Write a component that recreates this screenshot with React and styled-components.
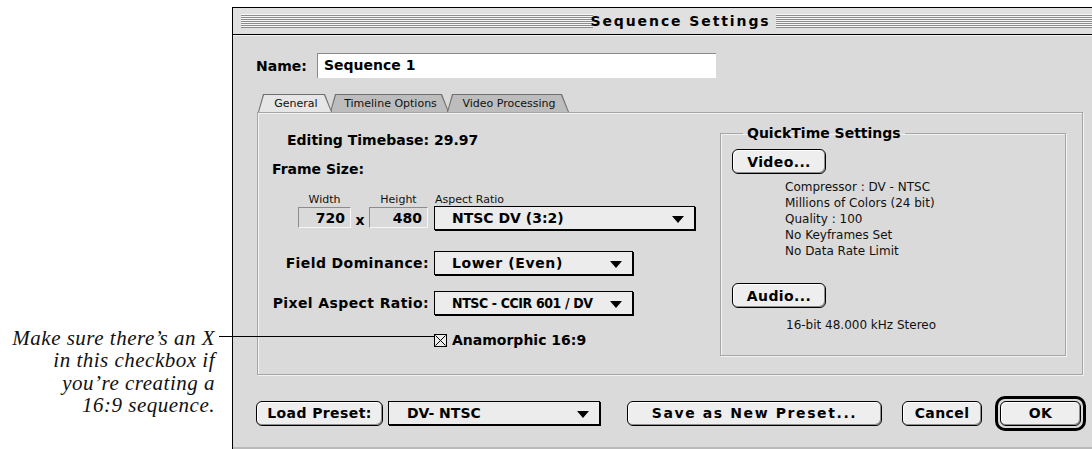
import React from "react";
import styled, { createGlobalStyle } from "styled-components";

const GlobalStyle = createGlobalStyle`
  html, body {
    margin: 0;
    padding: 0;
    background: #fff;
    overflow: hidden;
  }
  body {
    font-family: "DejaVu Sans", sans-serif;
    color: #000;
  }
`;

const SequenceSettings = () => {
  return (
    <Page>
      <GlobalStyle />
      <Caption>
        <CaptionLine>Make sure there’s an X</CaptionLine>
        <CaptionLine>in this checkbox if</CaptionLine>
        <CaptionLine>you’re creating a</CaptionLine>
        <CaptionLine>16:9 sequence.</CaptionLine>
      </Caption>
      <Leader />

      <Window>
        <TitleBar>
          <Stripes />
          <Title>Sequence Settings</Title>
          <Stripes />
        </TitleBar>

        <Body>
          <NameRow>
            <NameLabel>Name:</NameLabel>
            <NameInput>Sequence 1</NameInput>
          </NameRow>

          <Tabs>
            <Tab $active $width={74}>
              <TabFace $active>General</TabFace>
            </Tab>
            <Tab $width={119}>
              <TabFace>Timeline Options</TabFace>
            </Tab>
            <Tab $width={122}>
              <TabFace>Video Processing</TabFace>
            </Tab>
          </Tabs>

          <Panel>
            <LeftCol>
              <Timebase>Editing Timebase: 29.97</Timebase>
              <SectionLabel>Frame Size:</SectionLabel>

              <FrameGrid>
                <SmallLabel $align="center">Width</SmallLabel>
                <span />
                <SmallLabel $align="center">Height</SmallLabel>
                <SmallLabel $align="left" $indent={7}>
                  Aspect Ratio
                </SmallLabel>

                <NumberBox>720</NumberBox>
                <Times>x</Times>
                <NumberBox>480</NumberBox>
                <Cell>
                  <Popup $width={262}>
                    NTSC DV (3:2)
                    <Arrow />
                  </Popup>
                </Cell>
              </FrameGrid>

              <FieldRow $top={20}>
                <FieldLabel>Field Dominance:</FieldLabel>
                <Popup $width={200} $spacing={0.6}>
                  Lower (Even)
                  <Arrow />
                </Popup>
              </FieldRow>

              <FieldRow $top={16}>
                <FieldLabel>Pixel Aspect Ratio:</FieldLabel>
                <Popup $width={200} $narrow>
                  NTSC - CCIR 601 / DV
                  <Arrow />
                </Popup>
              </FieldRow>

              <CheckRow>
                <CheckBox>
                  <svg width="11" height="11" viewBox="0 0 11 11">
                    <path d="M0.5 0.5 L10.5 10.5 M10.5 0.5 L0.5 10.5" stroke="#000" strokeWidth="1" />
                  </svg>
                </CheckBox>
                <CheckText>Anamorphic 16:9</CheckText>
              </CheckRow>
            </LeftCol>

            <Group>
              <Legend>QuickTime Settings</Legend>
              <PushButton $width={94}>Video...</PushButton>
              <Info>
                <div>Compressor : DV - NTSC</div>
                <div>Millions of Colors (24 bit)</div>
                <div>Quality : 100</div>
                <div>No Keyframes Set</div>
                <div>No Data Rate Limit</div>
              </Info>
              <PushButton $width={94} $top={24}>
                Audio...
              </PushButton>
              <Info $top={9} $indent={54}>
                16-bit 48.000 kHz Stereo
              </Info>
            </Group>
          </Panel>

          <ButtonRow>
            <PushButton $width={127}>Load Preset:</PushButton>
            <Popup $width={213} $gap={5} $pad={18}>
              DV- NTSC
              <Arrow />
            </Popup>
            <PushButton $width={255} $gap={27} $spacing={1.6}>
              Save as New Preset...
            </PushButton>
            <PushButton $width={80} $gap={20}>
              Cancel
            </PushButton>
            <DefaultRing>
              <PushButton $width={81}>OK</PushButton>
            </DefaultRing>
          </ButtonRow>
        </Body>
      </Window>
    </Page>
  );
};

const Page = styled.div`
  position: relative;
  display: flex;
  width: 1092px;
  height: 449px;
  overflow: hidden;
`;

const Caption = styled.div`
  width: 215px;
  flex-shrink: 0;
  box-sizing: border-box;
  padding-top: 327px;
  font-family: "Liberation Serif", serif;
  font-style: italic;
  font-size: 21px;
  letter-spacing: 0.5px;
  text-align: right;
  white-space: nowrap;
  color: #111;
`;

const CaptionLine = styled.div`
  height: 22.4px;
  line-height: 22.4px;
`;

/* leader from the caption to the checkbox */
const Leader = styled.div`
  position: absolute;
  left: 219px;
  top: 336px;
  width: 215px;
  height: 1px;
  background: #000;
  z-index: 2;
`;

const Window = styled.div`
  margin: 7px 0 0 17px;
  width: 896px;
  height: 442px;
  flex-shrink: 0;
  box-sizing: border-box;
  border-top: 1px solid #000;
  border-left: 1px solid #000;
  background: #dadada;
  display: flex;
  flex-direction: column;
`;

const TitleBar = styled.div`
  height: 26px;
  display: flex;
  align-items: center;
  gap: 5px;
  padding: 0 0 0 8px;
  background: #e0e0e0;
  border-bottom: 1px solid #000;
  box-shadow: 0 1px 0 #f4f4f4;
`;

const Stripes = styled.div`
  flex: 1;
  height: 14px;
  background: repeating-linear-gradient(
    to bottom,
    #f6f6f6 0 1px,
    #8c8c8c 1px 2px
  );
`;

const Title = styled.div`
  margin-left: -8px;
  font-size: 14px;
  font-weight: bold;
  letter-spacing: 1.9px;
  line-height: 16px;
`;

const Body = styled.div`
  flex: 1;
  padding: 18px 0 0 23px;
  border-bottom: 2px solid #b9b9b9;
  min-height: 0;
`;

const NameRow = styled.div`
  display: flex;
  align-items: center;
  height: 25px;
`;

const NameLabel = styled.div`
  width: 61px;
  font-size: 14px;
  font-weight: bold;
`;

const NameInput = styled.div`
  width: 399px;
  height: 25px;
  box-sizing: border-box;
  padding: 3px 0 0 6px;
  background: #fff;
  border-top: 1px solid #8a8a8a;
  border-left: 1px solid #8a8a8a;
  font-size: 14px;
  font-weight: bold;
`;

const Tabs = styled.div`
  display: flex;
  margin: 16px 0 0 2px;
  height: 18px;
`;

const Tab = styled.div`
  width: ${(p) => p.$width}px;
  height: 18px;
  margin-right: -2px;
  background: #6f6f6f;
  clip-path: polygon(0 100%, 5px 0, calc(100% - 7px) 0, 100% 100%);
  position: relative;
  z-index: ${(p) => (p.$active ? 2 : 1)};
`;

const TabFace = styled.div`
  height: 100%;
  box-sizing: border-box;
  margin: 0 1px;
  padding: 2px 0 0 2px;
  background: ${(p) => (p.$active ? "#e6e6e6" : "#bdbdbd")};
  border-top: 1px solid ${(p) => (p.$active ? "#fff" : "#cfcfcf")};
  clip-path: polygon(0 100%, 5px 1px, calc(100% - 7px) 1px, 100% 100%);
  font-size: 11px;
  text-align: center;
  color: #111;
`;

const Panel = styled.div`
  width: 826px;
  height: 263px;
  margin-left: 1px;
  box-sizing: border-box;
  border: 1px solid #a6a6a6;
  box-shadow: inset 1px 1px 0 #f2f2f2, 1px 1px 0 #f2f2f2;
  display: flex;
`;

const LeftCol = styled.div`
  width: 462px;
  flex-shrink: 0;
`;

const Timebase = styled.div`
  margin: 19px 0 0 29px;
  font-size: 14px;
  font-weight: bold;
  line-height: 16px;
`;

const SectionLabel = styled.div`
  margin: 13px 0 0 14px;
  font-size: 14px;
  font-weight: bold;
  line-height: 16px;
`;

const FrameGrid = styled.div`
  display: grid;
  grid-template-columns: 53px 18px 59px 268px;
  grid-template-rows: 11px 25px;
  margin: 18px 0 0 40px;
  align-items: start;
`;

const SmallLabel = styled.div`
  font-size: 11px;
  line-height: 10px;
  text-align: ${(p) => p.$align};
  padding-left: ${(p) => p.$indent || 0}px;
  color: #111;
`;

const NumberBox = styled.div`
  height: 21px;
  margin-top: 1px;
  box-sizing: border-box;
  padding: 2px 5px 0 0;
  text-align: right;
  border-top: 1px solid #8c8c8c;
  border-left: 1px solid #8c8c8c;
  border-right: 1px solid #f6f6f6;
  border-bottom: 1px solid #f6f6f6;
  font-size: 14px;
  font-weight: bold;
`;

const Times = styled.div`
  padding-top: 6px;
  text-align: center;
  font-size: 14px;
  font-weight: bold;
`;

const Cell = styled.div`
  padding-left: 6px;
`;

const Popup = styled.div`
  position: relative;
  width: ${(p) => p.$width - 1}px;
  height: 24px;
  flex-shrink: 0;
  margin-left: ${(p) => p.$gap || 0}px;
  box-sizing: border-box;
  padding: 3px 0 0 ${(p) => p.$pad || 17}px;
  background: #ececec;
  border: 1px solid #000;
  box-shadow: 1px 1px 0 #000;
  font-family: ${(p) => (p.$narrow ? '"DejaVu Sans Condensed", "DejaVu Sans"' : '"DejaVu Sans"')}, sans-serif;
  font-size: 14px;
  font-weight: bold;
  letter-spacing: ${(p) => (p.$narrow ? -0.4 : p.$spacing || 0)}px;
  white-space: nowrap;
`;

const Arrow = styled.span`
  position: absolute;
  right: 10px;
  top: 9px;
  width: 0;
  height: 0;
  border-left: 6px solid transparent;
  border-right: 6px solid transparent;
  border-top: 7px solid #000;
`;

const FieldRow = styled.div`
  display: flex;
  align-items: center;
  margin-top: ${(p) => p.$top}px;
`;

const FieldLabel = styled.div`
  width: 171px;
  padding-right: 5px;
  text-align: right;
  font-size: 14px;
  font-weight: bold;
  letter-spacing: 0.4px;
  white-space: nowrap;
`;

const CheckRow = styled.div`
  display: flex;
  align-items: center;
  margin: 17px 0 0 176px;
`;

const CheckBox = styled.div`
  width: 13px;
  height: 13px;
  box-sizing: border-box;
  border: 1px solid #000;
  background: #ececec;
  display: flex;
  position: relative;
  z-index: 3;
`;

const CheckText = styled.div`
  margin-left: 5px;
  font-size: 14px;
  font-weight: bold;
`;

const Group = styled.fieldset`
  width: 346px;
  height: 231px;
  margin: 12px 0 0 0;
  padding: 8px 0 0 11px;
  box-sizing: border-box;
  border: 1px solid #a6a6a6;
  box-shadow: inset 1px 1px 0 #f2f2f2, 1px 1px 0 #f2f2f2;
`;

const Legend = styled.legend`
  margin-left: 11px;
  padding: 0 4px;
  font-size: 14px;
  font-weight: bold;
  line-height: 16px;
`;

const PushButton = styled.div`
  width: ${(p) => p.$width}px;
  height: 25px;
  flex-shrink: 0;
  margin-left: ${(p) => p.$gap || 0}px;
  margin-top: ${(p) => p.$top || 0}px;
  box-sizing: border-box;
  border: 1px solid #000;
  border-radius: 6px;
  background: #eeeeee;
  box-shadow: inset -1px -1px 0 #8e8e8e, inset 1px 1px 0 #fff;
  display: flex;
  align-items: center;
  justify-content: center;
  font-size: 14px;
  font-weight: bold;
  letter-spacing: ${(p) => p.$spacing || 0.4}px;
  white-space: nowrap;
`;

const Info = styled.div`
  margin: ${(p) => p.$top || 5}px 0 0 ${(p) => p.$indent || 53}px;
  font-size: 12px;
  line-height: 16px;
  color: #111;
`;

const ButtonRow = styled.div`
  display: flex;
  align-items: center;
  margin-top: 20px;
  height: 36px;
`;

const DefaultRing = styled.div`
  margin-left: 13px;
  padding: 2px;
  border: 3px solid #000;
  border-radius: 10px;
`;

export default SequenceSettings;
